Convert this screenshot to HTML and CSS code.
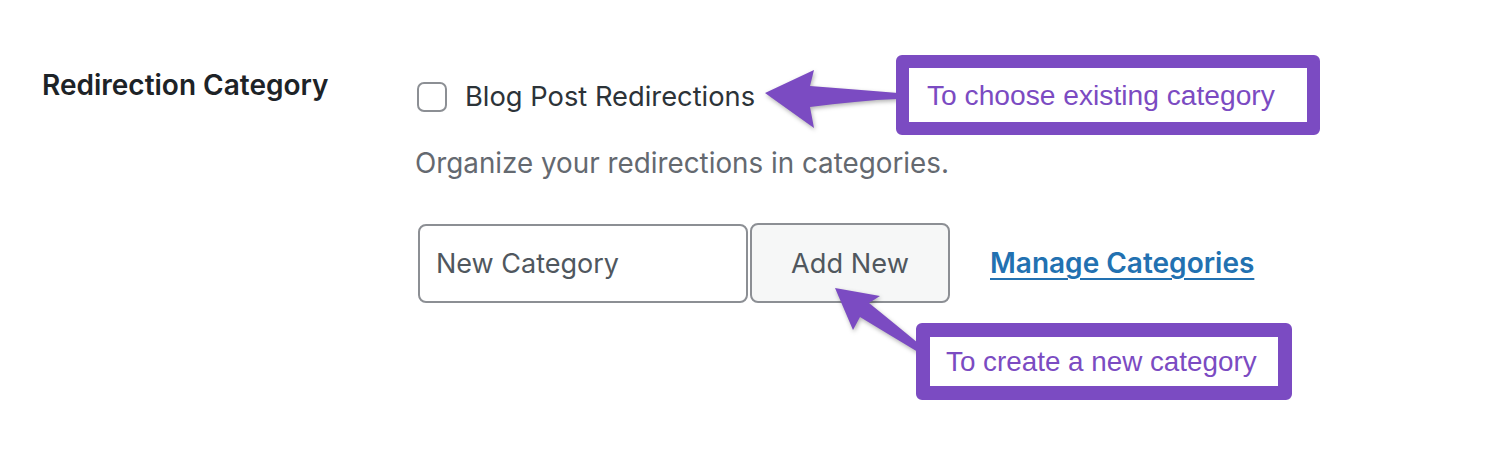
FILE: index.html
```html
<!DOCTYPE html>
<html lang="en">
<head>
  <meta charset="UTF-8" />
  <title>Redirection Category</title>
  <link rel="stylesheet" href="styles.css">
</head>
<body>
  <div class="page">
    <div class="setting-row">
      <div class="setting-label">Redirection Category</div>
      <div class="setting-field">
        <label class="check">
          <span class="check-box"></span>
          <span>Blog Post Redirections</span>
        </label>
        <p class="desc">Organize your redirections in categories.</p>
        <div class="add-row">
          <input class="new-cat" type="text" placeholder="New Category">
          <button class="add-btn">Add New</button>
          <a class="manage-link" href="#">Manage Categories</a>
        </div>
      </div>
    </div>

    <!-- annotations -->
    <svg class="arrows" width="1500" height="450" viewBox="0 0 1500 450">
      <path d="M765 93 L814 70 L810 86 C840 88 870 91 898 93 L898 99 C870 100 840 103 810 107 L814 128 Z" />
      <path d="M835 288 L880 296 L869 303 Q895 324 918 343 L918 352 Q888 334 860 317 L853 330 Z" />
    </svg>
    <div class="callout callout-choose">To choose existing category</div>
    <div class="callout callout-create">To create a new category</div>
  </div>
</body>
</html>
```

FILE: styles.css
```css
:root {
  --purple: #7b4bc2;
  --field-border: #8c8f94;
}

body {
  margin: 0;
  background: #ffffff;
  font-family: Inter, "Noto Sans", sans-serif;
}

.page {
  position: relative;
  width: 1500px;
  height: 450px;
  padding: 70px 0 0 42px;
  box-sizing: border-box;
}

.setting-row {
  display: flex;
  align-items: flex-start;
}

.setting-label {
  width: 375px;
  font-size: 28px;
  line-height: 30px;
  font-weight: 600;
  color: #1d2327;
}

.setting-field {
  padding-top: 12px;
}

.check {
  display: flex;
  align-items: center;
  gap: 18px;
  font-size: 27.3px;
  line-height: 30px;
  color: #2c3338;
}

.check-box {
  width: 30px;
  height: 30px;
  box-sizing: border-box;
  border: 2px solid var(--field-border);
  border-radius: 7px;
  background: #fff;
}

.desc {
  margin: 36px 0 0 -2px;
  font-size: 27.8px;
  line-height: 30px;
  color: #646970;
}

.add-row {
  display: flex;
  align-items: center;
  margin-top: 45px;
}

.new-cat {
  width: 330px;
  height: 79px;
  margin-left: 1px;
  box-sizing: border-box;
  border: 2px solid var(--field-border);
  border-radius: 8px;
  padding: 0 16px;
  font-family: inherit;
  font-size: 27px;
  color: #2c3338;
  background: #fff;
}

.new-cat::placeholder {
  color: #50575e;
}

.add-btn {
  width: 200px;
  height: 80px;
  margin-left: 2px;
  box-sizing: border-box;
  border: 2px solid var(--field-border);
  border-radius: 8px;
  background: #f6f7f7;
  font-family: inherit;
  font-size: 27.2px;
  color: #50575e;
}

.manage-link {
  margin-left: 40px;
  font-size: 28px;
  font-weight: 600;
  color: #2271b1;
  text-decoration: underline;
  text-decoration-thickness: 2px;
  text-underline-offset: 5px;
}

.arrows {
  position: absolute;
  top: 0;
  left: 0;
  pointer-events: none;
  fill: var(--purple);
  filter: drop-shadow(1px 2px 2px rgba(0, 0, 0, 0.3));
}

.callout {
  position: absolute;
  box-sizing: border-box;
  background: #fff;
  border-radius: 6px;
  font-family: "Liberation Sans", Arial, sans-serif;
  font-size: 28.2px;
  color: var(--purple);
  display: flex;
  align-items: center;
}

.callout-choose {
  left: 896px;
  top: 55px;
  width: 424px;
  height: 80px;
  border: 13px solid var(--purple);
  padding-left: 18px;
}

.callout-create {
  left: 916px;
  top: 323px;
  width: 376px;
  height: 77px;
  border: 14px solid var(--purple);
  padding-left: 16px;
  font-size: 27.8px;
}
```
